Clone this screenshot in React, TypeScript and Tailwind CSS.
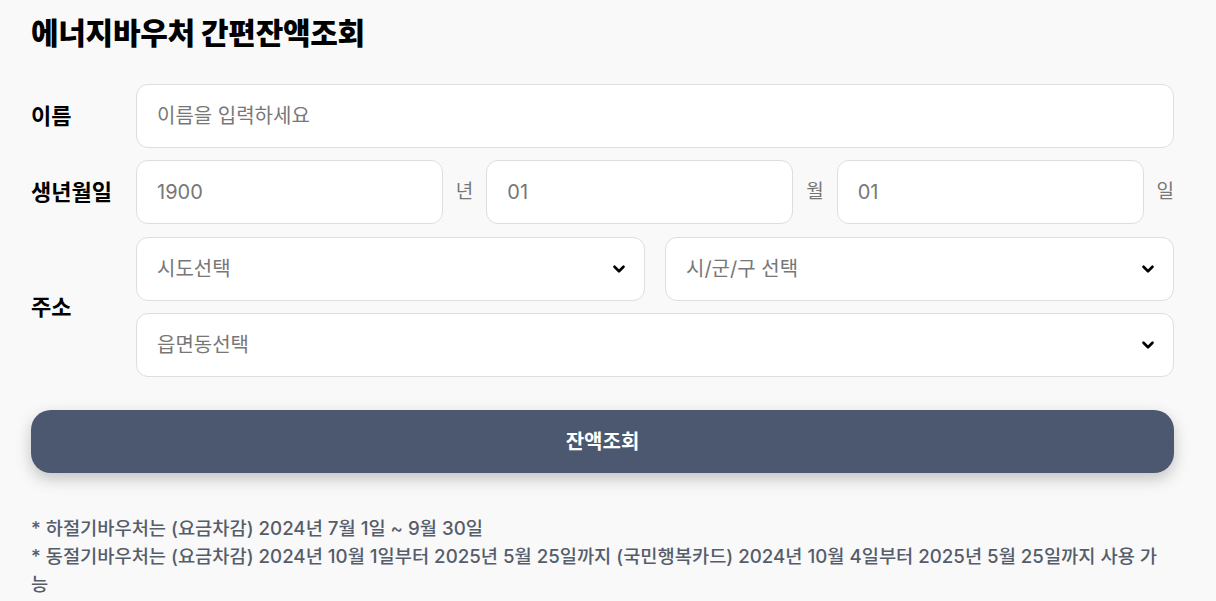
import { ChevronDown } from 'lucide-react';

const font = { fontFamily: 'Inter, "Noto Sans CJK KR", sans-serif' };

const inputCls =
  'h-16 w-0 min-w-0 flex-1 rounded-xl border border-[#dedede] bg-white px-5 text-[20px] outline-none placeholder:text-[#777]';

function Select({ label, className = '' }: { label: string; className?: string }) {
  return (
    <div className={`flex h-16 items-center justify-between rounded-xl border border-[#dedede] bg-white pl-5 pr-4 ${className}`}>
      <span className="text-[20px] text-[#777]">{label}</span>
      <ChevronDown size={18} strokeWidth={3.5} className="text-black" />
    </div>
  );
}

export default function App() {
  return (
    <div className="min-h-[601px] bg-[#f9f9f9] text-black" style={font}>
      <div className="ml-[31px] w-[1143px] pt-[12px]">
        <h1 className="text-[30px] font-extrabold leading-[42px] tracking-[-0.3px]">에너지바우처 간편잔액조회</h1>

        <div className="mt-[30px] flex items-center">
          <label className="w-[105px] shrink-0 text-[22px] font-bold">이름</label>
          <input placeholder="이름을 입력하세요" className={inputCls} />
        </div>

        <div className="mt-3 flex items-center">
          <label className="w-[105px] shrink-0 text-[22px] font-bold">생년월일</label>
          <div className="flex flex-1 items-center gap-[13px]">
            <input placeholder="1900" className={inputCls} />
            <span className="text-[19px] text-[#777]">년</span>
            <input placeholder="01" className={inputCls} />
            <span className="text-[19px] text-[#777]">월</span>
            <input placeholder="01" className={inputCls} />
            <span className="text-[19px] text-[#777]">일</span>
          </div>
        </div>

        <div className="mt-[13px] flex items-center">
          <label className="w-[105px] shrink-0 text-[22px] font-bold">주소</label>
          <div className="flex flex-1 flex-col gap-3">
            <div className="flex gap-5">
              <Select label="시도선택" className="flex-1" />
              <Select label="시/군/구 선택" className="flex-1" />
            </div>
            <Select label="읍면동선택" />
          </div>
        </div>

        <button className="mt-[33px] h-[63px] w-full rounded-[20px] bg-[#4b5870] text-[20px] font-bold text-white shadow-[0_6px_16px_rgba(0,0,0,0.22)]">
          잔액조회
        </button>

        <div className="mt-[42px] w-full break-all text-[18.7px] font-medium leading-[28px] text-[#555d6b]">
          <p>* 하절기바우처는 (요금차감) 2024년 7월 1일 ~ 9월 30일</p>
          <p>* 동절기바우처는 (요금차감) 2024년 10월 1일부터 2025년 5월 25일까지 (국민행복카드) 2024년 10월 4일부터 2025년 5월 25일까지 사용 가능</p>
        </div>
      </div>
    </div>
  );
}
